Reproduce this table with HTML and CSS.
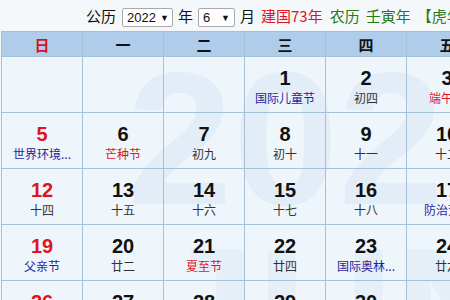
FILE: index.html
```html
<!DOCTYPE html>
<html lang="zh-CN">
<head>
<meta charset="utf-8">
<title>万年历 2022年6月</title>
<link rel="stylesheet" href="styles.css">
</head>
<body>
<div class="cal">
  <div class="topbar">
    <span class="lbl">公历</span>
    <span class="sel sel-year">2022<span class="arr">▼</span></span>
    <span class="lbl">年</span>
    <span class="sel sel-month">6<span class="arr">▼</span></span>
    <span class="lbl">月</span>
    <span class="lbl red">建国73年</span>
    <span class="lbl green">农历</span>
    <span class="lbl green">壬寅年</span>
    <span class="lbl green">【虎年】</span>
  </div>
  <div class="board">
    <div class="wm wm-year">2022</div>
    <div class="wm wm-month">JUN</div>
    <div class="grid">
      <div class="hd sun">日</div>
      <div class="hd">一</div>
      <div class="hd">二</div>
      <div class="hd">三</div>
      <div class="hd">四</div>
      <div class="hd">五</div>
      <div class="hd">六</div>

      <div class="day"></div>
      <div class="day"></div>
      <div class="day"></div>
      <div class="day"><b>1</b><i class="fest">国际儿童节</i></div>
      <div class="day"><b>2</b><i>初四</i></div>
      <div class="day"><b>3</b><i class="term">端午节</i></div>
      <div class="day"><b>4</b><i>初六</i></div>

      <div class="day"><b class="sun">5</b><i class="fest">世界环境...</i></div>
      <div class="day"><b>6</b><i class="term">芒种节</i></div>
      <div class="day"><b>7</b><i>初九</i></div>
      <div class="day"><b>8</b><i>初十</i></div>
      <div class="day"><b>9</b><i>十一</i></div>
      <div class="day"><b>10</b><i>十二</i></div>
      <div class="day"><b>11</b><i>十三</i></div>

      <div class="day"><b class="sun">12</b><i>十四</i></div>
      <div class="day"><b>13</b><i>十五</i></div>
      <div class="day"><b>14</b><i>十六</i></div>
      <div class="day"><b>15</b><i>十七</i></div>
      <div class="day"><b>16</b><i>十八</i></div>
      <div class="day"><b>17</b><i class="fest">防治荒...</i></div>
      <div class="day"><b>18</b><i>二十</i></div>

      <div class="day"><b class="sun">19</b><i class="fest">父亲节</i></div>
      <div class="day"><b>20</b><i>廿二</i></div>
      <div class="day"><b>21</b><i class="term">夏至节</i></div>
      <div class="day"><b>22</b><i>廿四</i></div>
      <div class="day"><b>23</b><i class="fest">国际奥林...</i></div>
      <div class="day"><b>24</b><i>廿六</i></div>
      <div class="day"><b>25</b><i>廿七</i></div>

      <div class="day"><b class="sun">26</b><i>廿八</i></div>
      <div class="day"><b>27</b><i>廿九</i></div>
      <div class="day"><b>28</b><i>三十</i></div>
      <div class="day"><b>29</b><i>六月</i></div>
      <div class="day"><b>30</b><i>初二</i></div>
      <div class="day"></div>
      <div class="day"></div>
    </div>
  </div>
</div>
</body>
</html>
```

FILE: styles.css
```css
html, body {
  margin: 0;
  padding: 0;
  overflow: hidden;
  background: #f4f8fb;
}

.cal {
  width: 580px;
  font-family: "Noto Sans CJK SC", "Liberation Sans", sans-serif;
  color: #111;
}

.topbar {
  height: 31px;
  display: flex;
  align-items: center;
  gap: 5px;
  padding-left: 86px;
  background: #f4f8fb;
  font-size: 15px;
  line-height: 18px;
}

.lbl { white-space: nowrap; }
.red { color: #e0141e; margin-left: 1px; margin-right: 1px; }
.green { color: #2a7a18; margin-left: 1px; }

.sel {
  box-sizing: border-box;
  height: 19px;
  margin-top: 4px;
  display: flex;
  align-items: center;
  justify-content: space-between;
  padding: 0 4px 0 4px;
  background: #fff;
  border: 1px solid #a9a9a9;
  border-radius: 2px;
  font-family: "Liberation Sans", Arial, sans-serif;
  font-size: 13px;
}
.sel-year { width: 51px; margin-left: 1px; }
.sel-month { width: 37px; }
.arr { font-size: 9px; margin-left: 4px; }

.board {
  position: relative;
  margin-left: 1px;
  background: #eef5fb;
}

.wm {
  position: absolute;
  z-index: 0;
  font-family: "Liberation Sans", Arial, sans-serif;
  font-weight: bold;
  color: #e2edf7;
  line-height: 1;
  white-space: nowrap;
  pointer-events: none;
}
.wm-year { left: 126px; top: 12px; font-size: 190px; }
.wm-month { left: 150px; top: 188px; font-size: 190px; color: #e5eff8; }

.grid {
  position: relative;
  z-index: 1;
  display: grid;
  grid-template-columns: repeat(7, 81px);
  grid-auto-rows: 56px;
  grid-template-rows: 25px;
  border-top: 1px solid #a6c0d6;
  border-left: 1px solid #a6c0d6;
}

.hd, .day {
  border-right: 1px solid #a6c0d6;
  border-bottom: 1px solid #a6c0d6;
}

.hd {
  background: #afcdeb;
  display: flex;
  align-items: center;
  justify-content: center;
  font-size: 15px;
  font-weight: bold;
  color: #111;
}
.hd.sun { color: #d0141c; }

.day {
  display: flex;
  flex-direction: column;
  align-items: center;
  padding-top: 9px;
  box-sizing: border-box;
}

.day b {
  font-family: "Liberation Sans", Arial, sans-serif;
  font-weight: bold;
  font-size: 20px;
  line-height: 24px;
  color: #111;
}
.day b.sun { color: #e0141e; }

.day i {
  font-style: normal;
  font-size: 12px;
  line-height: 16px;
  color: #333;
  white-space: nowrap;
}
.day i.fest { color: #1f1fa0; }
.day i.term { color: #e0141e; }
```
